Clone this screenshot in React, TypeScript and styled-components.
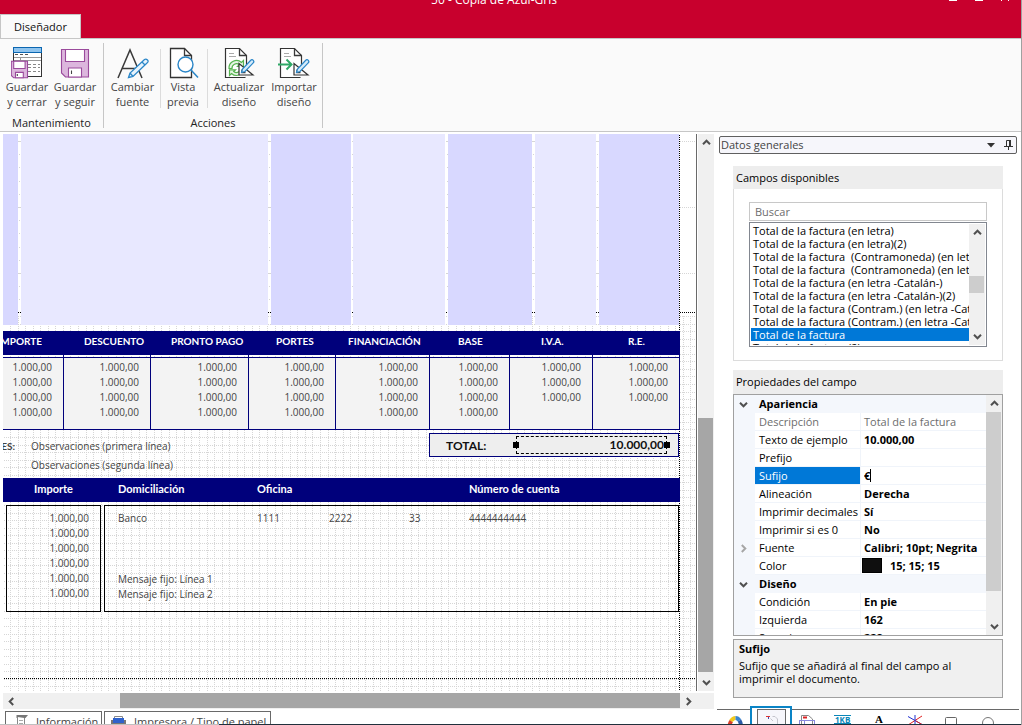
import React from "react";
import styled, { createGlobalStyle } from "styled-components";

const ui = `"Open Sans", "Noto Sans", sans-serif`;
const report = `Lato, "Open Sans", sans-serif`;
const navy = "#00007b";

const Global = createGlobalStyle`
  * { box-sizing: border-box; }
  html, body, #root { height: 100%; }
  body { margin: 0; background: #fff; overflow: hidden; font: 11px/15px ${ui}; color: #000; }
  button { font: inherit; color: inherit; background: none; border: 0; padding: 0; margin: 0; }
  ul, p, h2, h3 { margin: 0; padding: 0; list-style: none; }
  table { border-spacing: 0; }
  svg { display: block; flex: none; }
`;

const Shell = styled.div`
  height: 100vh;
  display: flex;
  flex-direction: column;
  border-right: 1px solid #a0a0a0;
`;

/* ---------- title bar ---------- */
const TitleBar = styled.header`
  flex: none;
  height: 38px;
  background: #c8002d;
  color: #fff;
  overflow: hidden;
`;
const TitleRow = styled.div`
  height: 14px;
  display: flex;
  align-items: flex-start;
`;
const TitleText = styled.div`
  flex: 1;
  margin-top: -8px;
  padding-left: 39px;
  font-size: 12px;
  line-height: 16px;
  text-align: center;
`;
const WindowButtons = styled.div`
  display: flex;
  gap: 18px;
  padding-right: 12px;
`;
const WindowButton = styled.button`
  width: 8px;
  height: 1px;
  background: #fff;
`;
const MaximizeButton = styled(WindowButton)``;
const CloseButton = styled.button`
  width: 8px;
  height: 1px;
  border: solid #fff;
  border-width: 0 1px;
`;
const RibbonTab = styled.button`
  display: block;
  width: 81px;
  height: 24px;
  border: 1px solid #c6c6c6;
  border-bottom: 0;
  background: #fafafa;
  color: #111;
`;

/* ---------- ribbon ---------- */
const Ribbon = styled.nav`
  flex: none;
  height: 94px;
  display: flex;
  align-items: stretch;
  padding: 4px 0 3px;
  background: #fafafa;
  border-top: 1px solid #c6c6c6;
  border-bottom: 1px solid #c6c6c6;
`;
const RibbonGroup = styled.section`
  display: flex;
  flex-direction: column;
  justify-content: space-between;
  border-right: 1px solid #c6c6c6;
`;
const RibbonButtons = styled.div`
  display: flex;
  align-items: flex-start;
  padding: 0 4px 0 3px;
`;
const RibbonButton = styled.button<{ $w: number }>`
  width: ${(p) => p.$w}px;
  padding-top: 4px;
  display: flex;
  flex-direction: column;
  align-items: center;
  color: #444;
  white-space: pre;
  text-align: center;
`;
const RibbonDivider = styled.i`
  width: 1px;
  height: 59px;
  margin: 6px 0 0 2px;
  background: #dcdcdc;
`;
const GroupLabel = styled.div`
  line-height: 11px;
  text-align: center;
  color: #222;
`;

/* ---------- main split ---------- */
const Main = styled.main`
  flex: 1;
  min-height: 0;
  display: grid;
  grid-template-columns: minmax(0, 1fr) 306px;
`;
const Designer = styled.section`
  min-height: 0;
  padding: 2px 1px 0 3px;
  display: flex;
  flex-direction: column;
  gap: 2px;
`;
const CanvasRow = styled.div`
  flex: 1;
  min-height: 0;
  display: flex;
  gap: 1px;
`;
const Canvas = styled.div`
  flex: 1;
  min-width: 0;
  overflow: hidden;
  position: relative;
  border-right: 1px solid #696969;
  color: #444;
  font-size: 10px;
`;
const GridLayer = styled.svg`
  position: absolute;
  inset: 0;
`;
const Sheet = styled.div`
  position: relative;
  width: 677px;
`;
const Bands = styled.div`
  display: grid;
  grid-template-columns: 15px 247px 80px 92px 84px 61px 80px;
  justify-content: space-between;
  height: 191px;
  padding-right: 1px;
`;
const Band = styled.div<{ $dark?: boolean }>`
  background: ${(p) => (p.$dark ? "#d8d8ff" : "#e8e8ff")};
`;
const Totals = styled.table`
  width: 677px;
  margin-top: 6px;
  table-layout: fixed;
  border-bottom: 1px solid ${navy};
`;
const TotalsHead = styled.th<{ $indent: number }>`
  height: 26px;
  padding: 0 0 5px ${(p) => p.$indent}px;
  border-right: 1px solid ${navy};
  background: linear-gradient(${navy} 24px, transparent 24px);
  color: #fff;
  font-family: ${report};
  font-size: 10px;
  font-weight: 700;
  text-align: left;
  white-space: nowrap;
`;
const TotalsHeadClip = styled.span`
  display: flex;
  justify-content: flex-end;
  width: 39px;
  overflow: hidden;
`;
const TotalsCell = styled.td<{ $edge?: "first" | "last" }>`
  height: ${(p) => (p.$edge === "first" ? 18 : p.$edge === "last" ? 24 : 15)}px;
  padding: ${(p) => (p.$edge === "first" ? 2 : 0)}px 11px 0 0;
  border-right: 1px solid ${navy};
  border-top: ${(p) => (p.$edge === "first" ? `1px solid ${navy}` : "0")};
  background: #f3f3f3;
  line-height: 15px;
  text-align: right;
  vertical-align: top;
`;
const SummaryRow = styled.div`
  display: flex;
  justify-content: space-between;
  height: 48px;
  padding: 3px 1px 0 0;
`;
const Notes = styled.div`
  display: grid;
  grid-template-columns: 28px auto;
  grid-auto-rows: 19px;
  align-content: start;
  padding-top: 4px;
  line-height: 19px;
`;
const NotesLabel = styled.b`
  direction: rtl;
  width: 12px;
  overflow: hidden;
  font-family: ${report};
`;
const TotalBox = styled.div`
  width: 250px;
  height: 24px;
  display: flex;
  justify-content: space-between;
  align-items: center;
  padding: 0 11px 0 16px;
  border: 1px solid ${navy};
  background: #eee;
  color: #111;
  font-family: ${report};
  font-size: 12px;
  font-weight: 700;
`;
const SelectedField = styled.div`
  position: relative;
  width: 151px;
  height: 18px;
  padding-right: 2px;
  border: 1px dashed #000;
  line-height: 16px;
  text-align: right;
`;
const Handle = styled.i<{ $side: "left" | "right" }>`
  position: absolute;
  top: 5px;
  ${(p) => p.$side}: -4px;
  width: 6px;
  height: 6px;
  background: #000;
`;
const BankHeader = styled.div`
  display: grid;
  grid-template-columns: 84px 139px 212px auto;
  height: 24px;
  padding-left: 31px;
  background: ${navy};
  color: #fff;
  font-family: ${report};
  font-size: 11px;
  font-weight: 700;
  line-height: 21px;
`;
const BankRow = styled.div`
  display: grid;
  grid-template-columns: 95px 575px;
  gap: 3px;
  margin: 3px 0 0 3px;
  line-height: 15px;
`;
const BankBox = styled.div`
  height: 107px;
  padding: 5px 11px 0 13px;
  border: 1px solid #000;
`;
const Amounts = styled.div`
  display: flex;
  flex-direction: column;
  text-align: right;
`;
const BankLine = styled.div`
  display: grid;
  grid-template-columns: 139px 72px 80px 60px auto;
  margin-bottom: 46px;
`;

/* ---------- scroll bars ---------- */
const Bar = styled.div<{ $axis: "row" | "column" }>`
  flex: none;
  display: flex;
  flex-direction: ${(p) => p.$axis};
  ${(p) => (p.$axis === "row" ? "height" : "width")}: 16px;
  background: #f0f0f0;
`;
const Arrow = styled.button<{ $axis: "row" | "column" }>`
  flex: none;
  ${(p) => (p.$axis === "row" ? "width: 17px; height: 16px" : "width: 16px; height: 17px")};
  display: grid;
  place-items: center;
  color: #505050;
`;
const Track = styled.div<{ $grow: number }>`
  flex: ${(p) => p.$grow} 1 0;
`;
const Thumb = styled.div<{ $grow: number; $color: string; $axis: "row" | "column" }>`
  flex: ${(p) => p.$grow} 1 0;
  background: ${(p) => p.$color};
  ${(p) => (p.$axis === "row" ? "margin-bottom" : "margin-right")}: 1px;
`;
const Corner = styled.div`
  width: 17px;
`;
const ChevronSvg = styled.svg<{ $turn: number }>`
  transform: rotate(${(p) => p.$turn}deg);
`;

function Chevron({ turn, color = "currentColor" }: { turn: number; color?: string }) {
  return (
    <ChevronSvg $turn={turn} width="9" height="9" viewBox="0 0 9 9">
      <path d="M1 6.2 4.5 2.7 8 6.2" fill="none" stroke={color} strokeWidth="2" />
    </ChevronSvg>
  );
}

function ScrollBar(p: { axis: "row" | "column"; parts: [number, number, number]; color: string; corner?: boolean }) {
  const row = p.axis === "row";
  return (
    <Bar $axis={p.axis}>
      <Arrow $axis={p.axis} aria-label={row ? "Izquierda" : "Arriba"}><Chevron turn={row ? -90 : 0} /></Arrow>
      <Track $grow={p.parts[0]} />
      <Thumb $grow={p.parts[1]} $color={p.color} $axis={p.axis} />
      <Track $grow={p.parts[2]} />
      <Arrow $axis={p.axis} aria-label={row ? "Derecha" : "Abajo"}><Chevron turn={row ? 90 : 180} /></Arrow>
      {p.corner && <Corner />}
    </Bar>
  );
}

/* ---------- sheet tabs ---------- */
const SheetTabs = styled.div`
  flex: none;
  height: 13px;
  display: flex;
  align-items: flex-start;
  gap: 2px;
  padding-left: 2px;
  overflow: hidden;
`;
const SheetTab = styled.button<{ $w: number }>`
  width: ${(p) => p.$w}px;
  height: 21px;
  display: flex;
  align-items: center;
  gap: 7px;
  padding-left: 5px;
  border: 1px solid #696969;
  color: #444;
  white-space: nowrap;
`;
const Footer = styled.footer`
  flex: none;
  height: 1px;
  background: linear-gradient(90deg, #c0c0c0 219px, #20303c 219px);
`;

/* ---------- side panel ---------- */
const Side = styled.aside`
  min-height: 0;
  display: flex;
  flex-direction: column;
  padding-top: 4px;
  overflow: hidden;
`;
const PanelTitle = styled.div`
  flex: none;
  height: 18px;
  margin: 0 4px;
  padding: 0 3px 0 1px;
  display: flex;
  align-items: center;
  gap: 9px;
  border: 1px solid #5f5f5f;
  border-radius: 2px;
  background: #f6f6fb;
  color: #444;
`;
const PanelName = styled.h2`
  flex: 1;
  padding-bottom: 1px;
  font-size: 11px;
  font-weight: 400;
`;
const Caption = styled.h3`
  flex: none;
  height: 24px;
  margin: 0 18px;
  padding-left: 3px;
  background: #ededed;
  font-size: 11px;
  font-weight: 400;
  line-height: 24px;
`;
const FieldsCaption = styled(Caption)`
  margin-top: 12px;
  height: 23px;
`;
const FieldsBody = styled.div`
  flex: none;
  height: 172px;
  margin: 0 18px 9px;
  padding: 13px 15px 0;
  border: 1px solid #dcdcdc;
  border-top: 0;
`;
const Search = styled.input`
  display: block;
  width: 100%;
  height: 19px;
  margin-bottom: 1px;
  padding: 0 5px;
  border: 1px solid #c8c8c8;
  border-radius: 0;
  font: 11px/15px ${ui};
  &::placeholder { color: #6d6d6d; }
`;
const ListFrame = styled.div`
  height: 125px;
  display: flex;
  padding: 1px;
  border: 1px solid #828790;
`;
const List = styled.ul`
  flex: 1;
  min-width: 0;
  overflow: hidden;
`;
const Item = styled.li<{ $on?: boolean }>`
  height: 13px;
  padding-left: 2px;
  line-height: 13px;
  white-space: pre;
  background: ${(p) => (p.$on ? "#0078d7" : "none")};
  color: ${(p) => (p.$on ? "#fff" : "#000")};
`;
const PropFrame = styled.div`
  flex: none;
  height: 242px;
  margin: 0 18px 3px;
  display: flex;
  border: 1px solid #a0a0a0;
`;
const PropScroll = styled.div`
  flex: 1;
  min-width: 0;
  overflow: hidden;
`;
const PropTable = styled.table`
  width: 100%;
  table-layout: fixed;
`;
const Gutter = styled.td`
  height: 18px;
  padding: 0 0 0 5px;
  background: #f4f7fc;
  color: #505050;
`;
const Category = styled.th`
  padding: 0 0 1px 4px;
  background: #f4f7fc;
  font-weight: 700;
  text-align: left;
  line-height: 17px;
`;
const PropName = styled.th<{ $on?: boolean; $dim?: boolean }>`
  padding: 0 0 0 4px;
  border-bottom: 1px solid #f0f4fa;
  background: ${(p) => (p.$on ? "#0078d7" : "#fff")};
  color: ${(p) => (p.$on ? "#fff" : p.$dim ? "#6d6d6d" : "#000")};
  font-weight: 400;
  line-height: 17px;
  text-align: left;
  white-space: nowrap;
`;
const PropValue = styled.td<{ $dim?: boolean }>`
  padding: 0 0 0 3px;
  border-left: 1px solid #f0f4fa;
  border-bottom: 1px solid #f0f4fa;
  color: ${(p) => (p.$dim ? "#6d6d6d" : "#000")};
  font-weight: ${(p) => (p.$dim ? 400 : 700)};
  line-height: 17px;
  white-space: nowrap;
`;
const Editor = styled.div`
  display: flex;
  align-items: center;
`;
const SuffixInput = styled.input`
  width: 6px;
  height: 15px;
  padding: 0;
  border: 0;
  outline: 0;
  font: 700 11px/15px ${ui};
`;
const Caret = styled.i`
  width: 1px;
  height: 13px;
  background: #000;
`;
const ColorValue = styled.div`
  display: flex;
  align-items: center;
  gap: 8px;
  margin-left: -2px;
`;
const Swatch = styled.i`
  width: 20px;
  height: 15px;
  background: #0f0f0f;
  border: 1px solid #000;
`;
const Help = styled.div`
  flex: none;
  height: 59px;
  margin: 0 18px 8px;
  padding: 2px 5px;
  border: 1px solid #a0a0a0;
  background: #f0f0f0;
  line-height: 13px;
`;
const HelpTitle = styled.b`
  display: block;
  line-height: 14px;
  margin-bottom: 3px;
`;
const Tools = styled.div`
  flex: none;
  height: 30px;
  margin: 3px 2px 0;
  display: flex;
  border-top: 1px solid #696969;
`;
const Tool = styled.button<{ $on?: boolean }>`
  width: ${(p) => (p.$on ? 42 : 36)}px;
  margin: ${(p) => (p.$on ? "-4px -3px 0" : "0")};
  padding-top: ${(p) => (p.$on ? 3 : 5)}px;
  display: flex;
  justify-content: center;
  align-items: flex-start;
  border: ${(p) => (p.$on ? "2px solid #0a84c6" : "0")};
  background: ${(p) => (p.$on ? "#fff" : "none")};
`;
const ActiveTab = styled.span`
  width: 29px;
  height: 26px;
  margin-top: -2px;
  padding: 5px 6px;
  border: 1px solid #696969;
  border-bottom: 0;
  background: #f6f6fb;
`;

/* ---------- ribbon icons ---------- */
const ink = { fill: "none", stroke: "#3a3a3a", strokeWidth: 1.3 };
const blue = "#2a86c8";

function Floppy({ x, y, s }: { x: number; y: number; s: number }) {
  return (
    <g transform={`translate(${x} ${y}) scale(${s})`} stroke="#9a4a9c" strokeWidth={1.1 / s}>
      <path d="M.5.5H27.5V28H4.5L.5 24z" fill="#dcb6dd" />
      <path d="M4.5.5H23.5V12.5H4.5z" fill="#fff" />
      <path d="M7.5 28V19H20.5V28z" fill="#fff" />
      <path d="M10.5 21.5V25" stroke="#444" />
    </g>
  );
}
const SaveCloseIcon = () => (
  <svg width="32" height="32" viewBox="0 1 32 32">
    <rect x="2.5" y="1.5" width="28" height="29" fill="#fff" stroke="#333" />
    <rect x="2.5" y="1.5" width="28" height="5" fill="#8fc4ee" stroke="#0b66b0" />
    <path d="M4 8.5h13" stroke="#555" strokeDasharray="3 2" />
    <path d="M3 11.5h27M3 14.5h27M9.5 11.5v4" stroke="#999" />
    <path d="M17 18.5h12M17 21.5h12M17 25.5h12" stroke="#888" strokeDasharray="3 2" />
    <Floppy x={0} y={15} s={0.6} />
  </svg>
);
const SaveIcon = () => (
  <svg width="32" height="32" viewBox="0 0 32 32"><Floppy x={2} y={2} s={1} /></svg>
);
const FontIcon = () => (
  <svg width="34" height="32" viewBox="0 0 34 32">
    <path d="M2 31 14 3 26 31M6.5 21.5H21.5" {...ink} strokeWidth="1.5" />
    <path d="M12.500 30.5 14 26 28.5 12.5Q30 11.5 31.5 13T31 16L17 29.5z M14 26 17 29.500M26 15l3 3" fill="#e6f3fc" stroke={blue} strokeWidth="1.3" />
  </svg>
);
const PreviewIcon = () => (
  <svg width="32" height="32" viewBox="0 0 32 32">
    <path d="M3.5 1.5H17.5L24.5 8.5V30.5H3.5z" fill="#fff" stroke="#333" strokeWidth="1.3" />
    <path d="M17.5 1.5V8.5H24.5" {...ink} />
    <circle cx="18.5" cy="17.500" r="7.5" fill="#fff" stroke={blue} strokeWidth="1.4" />
    <path d="M24 23 31 30.5" stroke={blue} strokeWidth="1.5" />
  </svg>
);
function PageBase() {
  return (
    <>
      <path d="M3.5 1.5H17.5L24.5 8.5V30.5H3.5z" fill="#fff" stroke="#333" strokeWidth="1.2" />
      <path d="M17.5 1.5V8.5H24.5" {...ink} />
      <path d="M7 6.5h5M7 9.5h7" stroke="#aaa" />
    </>
  );
}
function PageTools() {
  return (
    <>
      <path d="M25 24V32" stroke="#fafafa" strokeWidth="3" />
      <path d="M17 16.5V28H31z" fill="#fff" stroke="#333" strokeWidth="1.2" />
      <path d="M20 22.5V25.5H23.500" {...ink} />
      <path d="M19.5 25.5 20.5 22 28.5 13.5Q30 12 31.3 13.3T31 16.2L23 24.5z" fill="#d5ebfa" stroke={blue} strokeWidth="1.2" />
    </>
  );
}
const UpdateIcon = () => (
  <svg width="34" height="32" viewBox="0 0 34 32">
    <PageBase />
    <g fill="none" stroke="#55b34f" strokeWidth="1.2">
      <path d="M7 21.500A7.500 7.500 0 0 1 19.500 15.500L21.500 13.500V19.500H15.500L17.300 17.700A4.500 4.500 0 0 0 10 21.500z" fill="#e6f5e4" />
      <path d="M22 21A7.500 7.500 0 0 1 9.500 26.500L7.500 28.500V22.800H13.500L11.700 24.500A4.500 4.500 0 0 0 19 21z" fill="#e6f5e4" />
    </g>
    <PageTools />
  </svg>
);
const ImportIcon = () => (
  <svg width="34" height="32" viewBox="0 0 34 32">
    <PageBase />
    <path d="M1 17.5H14M9.5 12.5 14.5 17.5 9.5 22.5" fill="none" stroke="#2fa866" strokeWidth="2" />
    <PageTools />
  </svg>
);

/* ---------- report grid ---------- */
function ReportGrid() {
  const xs = Array.from({ length: 92 }, (_, i) => Math.round(7 + i * 7.56) + 0.5);
  const ys = Array.from({ length: 50 }, (_, i) => Math.round(182 + i * 7.56) + 0.5);
  const marks = Array.from({ length: 13 }, (_, i) => Math.round(7 + i * 13.2) + 0.5);
  const gaps = [16, 266, 349, 444, 530, 594];
  return (
    <GridLayer width="693" height="560" shapeRendering="crispEdges" aria-hidden>
      <g stroke="#d6d6d6" strokeDasharray="1 1">
        {xs.map((x) => <path key={x} d={`M${x} 182V557`} />)}
        {ys.map((y) => <path key={y} d={`M1 ${y}H693`} />)}
        {[7.5, 73.5, 139.5].map((y) => <path key={y} d={`M1 ${y}H693`} />)}
        {marks.map((y) => gaps.map((x) => <path key={`${x}-${y}`} d={`M${x} ${y}h1`} />))}
      </g>
      <g stroke="#000" strokeDasharray="1 1">
        <path d="M1 178.500H693M1 544.500H693M676.500 1V557" />
      </g>
    </GridLayer>
  );
}

/* ---------- data ---------- */
const columns = [
  { title: "IMPORTE", w: 61, indent: 0, rows: 4 },
  { title: "DESCUENTO", w: 87, indent: 20, rows: 4 },
  { title: "PRONTO PAGO", w: 98, indent: 20, rows: 4 },
  { title: "PORTES", w: 87, indent: 27, rows: 4 },
  { title: "FINANCIACIÓN", w: 94, indent: 12, rows: 4 },
  { title: "BASE", w: 80, indent: 28, rows: 4 },
  { title: "I.V.A.", w: 83, indent: 31, rows: 3 },
  { title: "R.E.", w: 87, indent: 35, rows: 3 },
];
const fields = [
  "Total de la factura (en letra)",
  "Total de la factura (en letra)(2)",
  "Total de la factura  (Contramoneda) (en letra)",
  "Total de la factura  (Contramoneda) (en letra)(2)",
  "Total de la factura (en letra -Catalán-)",
  "Total de la factura (en letra -Catalán-)(2)",
  "Total de la factura (Contram.) (en letra -Catalán-)",
  "Total de la factura (Contram.) (en letra -Catalán-)(2)",
  "Total de la factura",
  "Total de la factura (2)",
];
type Prop = { name: string; value?: string; cat?: boolean; kind?: "dim" | "edit" | "color" | "expand" };
const props: Prop[] = [
  { name: "Apariencia", cat: true },
  { name: "Descripción", value: "Total de la factura", kind: "dim" },
  { name: "Texto de ejemplo", value: "10.000,00" },
  { name: "Prefijo", value: "" },
  { name: "Sufijo", value: "€", kind: "edit" },
  { name: "Alineación", value: "Derecha" },
  { name: "Imprimir decimales", value: "Sí" },
  { name: "Imprimir si es 0", value: "No" },
  { name: "Fuente", value: "Calibri; 10pt; Negrita", kind: "expand" },
  { name: "Color", value: "15; 15; 15", kind: "color" },
  { name: "Diseño", cat: true },
  { name: "Condición", value: "En pie" },
  { name: "Izquierda", value: "162" },
  { name: "Superior", value: "228" },
];

function PropRow({ p }: { p: Prop }) {
  if (p.cat)
    return (
      <tr>
        <Gutter><Chevron turn={180} /></Gutter>
        <Category colSpan={2}>{p.name}</Category>
      </tr>
    );
  return (
    <tr>
      <Gutter>{p.kind === "expand" && <Chevron turn={90} color="#a6a6a6" />}</Gutter>
      <PropName $on={p.kind === "edit"} $dim={p.kind === "dim"} scope="row">{p.name}</PropName>
      <PropValue $dim={p.kind === "dim"}>
        {p.kind === "edit" ? (
          <Editor><SuffixInput aria-label={p.name} defaultValue={p.value} /><Caret /></Editor>
        ) : p.kind === "color" ? (
          <ColorValue><Swatch />{p.value}</ColorValue>
        ) : p.value}
      </PropValue>
    </tr>
  );
}

export default function App() {
  return (
    <Shell>
      <Global />
      <TitleBar>
        <TitleRow>
          <TitleText>50 - Copia de Azul-Gris</TitleText>
          <WindowButtons>
            <WindowButton aria-label="Minimizar" />
            <MaximizeButton aria-label="Maximizar" />
            <CloseButton aria-label="Cerrar" />
          </WindowButtons>
        </TitleRow>
        <RibbonTab>Diseñador</RibbonTab>
      </TitleBar>

      <Ribbon>
        <RibbonGroup>
          <RibbonButtons>
            <RibbonButton $w={48}><SaveCloseIcon />{"Guardar\ny cerrar"}</RibbonButton>
            <RibbonButton $w={48}><SaveIcon />{"Guardar\ny seguir"}</RibbonButton>
          </RibbonButtons>
          <GroupLabel>Mantenimiento</GroupLabel>
        </RibbonGroup>
        <RibbonGroup>
          <RibbonButtons>
            <RibbonButton $w={51}><FontIcon />{"Cambiar\nfuente"}</RibbonButton>
            <RibbonDivider />
            <RibbonButton $w={44}><PreviewIcon />{"Vista\nprevia"}</RibbonButton>
            <RibbonDivider />
            <RibbonButton $w={62}><UpdateIcon />{"Actualizar\ndiseño"}</RibbonButton>
            <RibbonButton $w={48}><ImportIcon />{"Importar\ndiseño"}</RibbonButton>
          </RibbonButtons>
          <GroupLabel>Acciones</GroupLabel>
        </RibbonGroup>
      </Ribbon>

      <Main>
        <Designer>
          <CanvasRow>
            <Canvas>
              <ReportGrid />
              <Sheet>
                <Bands>
                  <Band $dark /><Band /><Band $dark /><Band /><Band $dark /><Band /><Band $dark />
                </Bands>
                <Totals>
                  <colgroup>{columns.map((c) => <col key={c.title} style={{ width: c.w }} />)}</colgroup>
                  <thead>
                    <tr>
                      {columns.map((c, i) => (
                        <TotalsHead key={c.title} $indent={c.indent}>
                          {i === 0 ? <TotalsHeadClip>{c.title}</TotalsHeadClip> : c.title}
                        </TotalsHead>
                      ))}
                    </tr>
                  </thead>
                  <tbody>
                    {[0, 1, 2, 3].map((r) => (
                      <tr key={r}>
                        {columns.map((c) => (
                          <TotalsCell key={c.title} $edge={r === 0 ? "first" : r === 3 ? "last" : undefined}>
                            {r < c.rows ? "1.000,00" : ""}
                          </TotalsCell>
                        ))}
                      </tr>
                    ))}
                  </tbody>
                </Totals>
                <SummaryRow>
                  <Notes>
                    <NotesLabel><bdi>OBSERVACIONES:</bdi></NotesLabel>
                    <span>Observaciones (primera línea)</span>
                    <span />
                    <span>Observaciones (segunda línea)</span>
                  </Notes>
                  <TotalBox>
                    <span>TOTAL:</span>
                    <SelectedField>
                      10.000,00
                      <Handle $side="left" />
                      <Handle $side="right" />
                    </SelectedField>
                  </TotalBox>
                </SummaryRow>
                <BankHeader>
                  <span>Importe</span><span>Domiciliación</span><span>Oficina</span><span>Número de cuenta</span>
                </BankHeader>
                <BankRow>
                  <BankBox>
                    <Amounts>{[0, 1, 2, 3, 4, 5].map((n) => <span key={n}>1.000,00</span>)}</Amounts>
                  </BankBox>
                  <BankBox>
                    <BankLine>
                      <span>Banco</span><span>1111</span><span>2222</span><span>33</span><span>4444444444</span>
                    </BankLine>
                    <div>Mensaje fijo: Línea 1</div>
                    <div>Mensaje fijo: Línea 2</div>
                  </BankBox>
                </BankRow>
              </Sheet>
            </Canvas>
            <ScrollBar axis="column" parts={[267, 254, 2]} color="#a6a6a6" />
          </CanvasRow>
          <ScrollBar axis="row" parts={[100, 560, 0]} color="#a6a6a6" corner />
          <SheetTabs>
            <SheetTab $w={97}>
              <svg width="18" height="16" viewBox="0 0 18 16">
                <path d="M5.500 1H17L14.500 4H5.500z" fill="#777" />
                <path d="M6.500 3V15H13.500V4" fill="#fff" stroke="#888" />
                <path d="M8 6.5h4M8 9.5h4" stroke="#aaa" />
                <path d="M2 12.5h2" stroke="#888" />
              </svg>
              Información
            </SheetTab>
            <SheetTab $w={167}>
              <svg width="17" height="16" viewBox="0 0 17 16">
                <path d="M4.500 5V2.500H12.500V5" fill="#fff" stroke="#888" />
                <rect x="1" y="6" width="15" height="8" fill="#777" />
                <rect x="3" y="4" width="11" height="5" fill="#2f62cc" />
              </svg>
              Impresora / Tipo de papel
            </SheetTab>
          </SheetTabs>
        </Designer>

        <Side>
          <PanelTitle>
            <PanelName>Datos generales</PanelName>
            <button aria-label="Opciones">
              <svg width="8" height="5" viewBox="0 0 8 5"><path d="M0 0h8L4 4.500z" fill="#333" /></svg>
            </button>
            <button aria-label="Fijar">
              <svg width="9" height="10" viewBox="0 0 9 10">
                <path d="M2.5 6V.5H6.5V6M0 6.5H9M4.5 7V10" fill="none" stroke="#333" />
                <path d="M6 0V6" stroke="#333" strokeWidth="2" />
              </svg>
            </button>
          </PanelTitle>

          <FieldsCaption>Campos disponibles</FieldsCaption>
          <FieldsBody>
            <Search type="text" placeholder="Buscar" aria-label="Buscar" />
            <ListFrame>
              <List role="listbox" aria-label="Campos disponibles">
                {fields.map((f) => {
                  const on = f === "Total de la factura";
                  return <Item key={f} role="option" aria-selected={on} $on={on}>{f}</Item>;
                })}
              </List>
              <ScrollBar axis="column" parts={[35, 17, 35]} color="#cdcdcd" />
            </ListFrame>
          </FieldsBody>

          <Caption>Propiedades del campo</Caption>
          <PropFrame>
            <PropScroll>
              <PropTable>
                <colgroup><col style={{ width: 21 }} /><col style={{ width: 105 }} /><col /></colgroup>
                <tbody>{props.map((p) => <PropRow key={p.name} p={p} />)}</tbody>
              </PropTable>
            </PropScroll>
            <ScrollBar axis="column" parts={[0, 179, 27]} color="#cdcdcd" />
          </PropFrame>
          <Help>
            <HelpTitle>Sufijo</HelpTitle>
            <p>Sufijo que se añadirá al final del campo al imprimir el documento.</p>
          </Help>

          <Tools>
            <Tool aria-label="Colores">
              <svg width="16" height="16" viewBox="0 0 16 16" fill="none" strokeWidth="4">
                <path d="M2.500 12Q2.500 8 4.500 6" stroke="#d8402c" />
                <path d="M4 6Q6 3 8.500 3" stroke="#f2c91c" />
                <path d="M8.500 3Q11 3 12.500 5.500" stroke="#3a86d0" />
                <path d="M12.500 5.500Q14 8 14 12" stroke="#2c5ba8" />
              </svg>
            </Tool>
            <Tool $on aria-label="Campos">
              <ActiveTab>
                <svg width="16" height="16" viewBox="0 0 16 16">
                  <path d="M2 1.5h4" stroke="#d33" /><path d="M4.500 2v2" stroke="#44a" />
                  <path d="M6.500 3.500 9 6M8.500 1.500H11L13.500 4V12H6" fill="none" stroke="#c4c4cc" />
                </svg>
              </ActiveTab>
            </Tool>
            <Tool aria-label="Tabla">
              <svg width="16" height="16" viewBox="0 0 16 16">
                <path d="M2.5.5H9.5L13.5 4V15H2.5z" fill="#fff" stroke="#888" />
                <path d="M4 2.500h4" stroke="#d22" strokeWidth="2" />
                <path d="M.500 5.500H15.500M.500 9.500H15.500M.500 5v10M5.500 5v10M15.500 5v10" stroke="#88d" />
              </svg>
            </Tool>
            <Tool aria-label="Imagen">
              <svg width="18" height="16" viewBox="0 0 18 16">
                <path d="M0 .5H17M0 8.500H17" stroke="#0b86b8" />
                <text x="1" y="8" fontSize="8" fontWeight="700" fontFamily="Open Sans" fill="#0b86b8">1KB</text>
                <text x="0" y="16" fontSize="8" fontWeight="700" fontFamily="Open Sans">DUC:</text>
              </svg>
            </Tool>
            <Tool aria-label="Texto">
              <svg width="16" height="16" viewBox="0 0 16 16">
                <text x="4" y="8" fontSize="11" fontWeight="700" fontFamily="Liberation Serif">A</text>
                <path d="M1 10.500H15" stroke="#888" strokeWidth="1" />
              </svg>
            </Tool>
            <Tool aria-label="Líneas">
              <svg width="16" height="16" viewBox="0 0 16 16">
                <path d="M1 1.500 15 9.500" stroke="#2030d0" /><path d="M15 1 1 10" stroke="#e02020" />
                <path d="M8 0V14" stroke="#2030d0" /><path d="M9 6 15 9.500" stroke="#e02020" />
              </svg>
            </Tool>
            <Tool aria-label="Rectángulo">
              <svg width="14" height="16" viewBox="0 0 14 16"><rect x="1.500" y="2.500" width="11" height="11" rx="1" fill="none" stroke="#666" /></svg>
            </Tool>
            <Tool aria-label="Elipse">
              <svg width="14" height="16" viewBox="0 0 14 16"><circle cx="8" cy="8" r="5.500" fill="none" stroke="#777" /></svg>
            </Tool>
          </Tools>
        </Side>
      </Main>
      <Footer />
    </Shell>
  );
}
